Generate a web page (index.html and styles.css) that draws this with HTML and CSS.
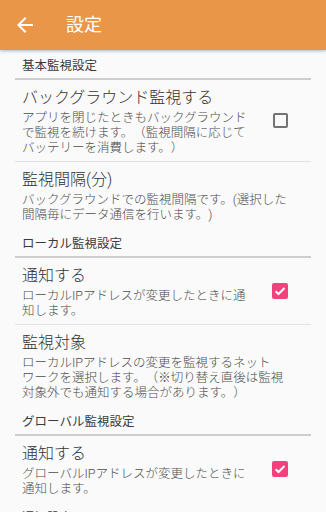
FILE: index.html
```html
<!DOCTYPE html>
<html lang="ja">
<head>
<meta charset="utf-8">
<title>設定</title>
<link rel="stylesheet" href="styles.css">
</head>
<body>
<header class="appbar">
  <svg class="appbar__back" viewBox="0 0 24 24" width="24" height="24" aria-hidden="true">
    <path d="M20 11H7.83l5.59-5.59L12 4l-8 8 8 8 1.41-1.41L7.83 13H20v-2z" fill="#fff"/>
  </svg>
  <h1 class="appbar__title">設定</h1>
</header>
<main class="prefs">
  <div class="category">基本監視設定</div>
  <div class="pref pref--divided">
    <div class="pref__text">
      <div class="pref__title">バックグラウンド監視する</div>
      <div class="pref__summary">アプリを閉じたときもバックグラウンドで監視を続けます。（監視間隔に応じてバッテリーを消費します。）</div>
    </div>
    <span class="check"></span>
  </div>
  <div class="pref pref--plain">
    <div class="pref__text">
      <div class="pref__title">監視間隔(分)</div>
      <div class="pref__summary">バックグラウンドでの監視間隔です。(選択した間隔毎にデータ通信を行います。)</div>
    </div>
  </div>

  <div class="category">ローカル監視設定</div>
  <div class="pref pref--divided">
    <div class="pref__text">
      <div class="pref__title">通知する</div>
      <div class="pref__summary">ローカルIPアドレスが変更したときに通知します。</div>
    </div>
    <span class="check check--on">
      <svg viewBox="0 0 16 16" width="16" height="16" aria-hidden="true"><path d="M3.6 8.2l2.9 2.8 6-6" fill="none" stroke="#fff" stroke-width="2"/></svg>
    </span>
  </div>
  <div class="pref pref--plain">
    <div class="pref__text">
      <div class="pref__title">監視対象</div>
      <div class="pref__summary">ローカルIPアドレスの変更を監視するネットワークを選択します。（※切り替え直後は監視対象外でも通知する場合があります。）</div>
    </div>
  </div>

  <div class="category">グローバル監視設定</div>
  <div class="pref">
    <div class="pref__text">
      <div class="pref__title">通知する</div>
      <div class="pref__summary">グローバルIPアドレスが変更したときに通知します。</div>
    </div>
    <span class="check check--on">
      <svg viewBox="0 0 16 16" width="16" height="16" aria-hidden="true"><path d="M3.6 8.2l2.9 2.8 6-6" fill="none" stroke="#fff" stroke-width="2"/></svg>
    </span>
  </div>

  <div class="category">通知設定</div>
</main>
</body>
</html>
```

FILE: styles.css
```css
html, body {
  margin: 0;
  padding: 0;
  background: #fafafa;
  font-family: Roboto, "Noto Sans CJK JP", sans-serif;
}

.appbar {
  height: 50px;
  background: #ea9649;
  display: flex;
  align-items: center;
  padding-left: 13px;
  box-shadow: 0 1px 3px rgba(0, 0, 0, 0.28);
  position: relative;
  z-index: 1;
}

.appbar__back {
  display: block;
  flex: none;
}

.appbar__title {
  margin: 0 0 0 29px;
  font-size: 18px;
  font-weight: 400;
  color: #fff;
  line-height: 24px;
}

.prefs {
  margin: 0 15px;
  line-break: strict;
  text-spacing-trim: space-all;
}

.category {
  padding: 8px 0 4px 7px;
  font-size: 12.5px;
  line-height: 16px;
  font-weight: 400;
  color: #3a3a3a;
  border-bottom: 2px solid #cdcdcd;
}

.pref {
  display: flex;
  align-items: center;
  padding: 6px 23px 6px 7px;
}

.pref--plain {
  padding-right: 20px;
}

.pref--divided {
  border-bottom: 1px solid #e3e3e3;
}

.pref__text {
  flex: 1;
  min-width: 0;
}

.pref__title {
  font-size: 16px;
  line-height: 24px;
  font-weight: 300;
  color: #333;
}

.pref__summary {
  font-size: 12.5px;
  line-height: 15px;
  font-weight: 300;
  color: #4d4d4d;
}

.check {
  flex: none;
  width: 15px;
  height: 15px;
  margin-left: 21px;
  box-sizing: border-box;
  border: 2px solid #737373;
  border-radius: 2px;
  display: flex;
  align-items: center;
  justify-content: center;
}

.check--on {
  width: 16px;
  height: 16px;
  border: none;
  background: #f2417c;
}

.check--on svg {
  display: block;
}
```
